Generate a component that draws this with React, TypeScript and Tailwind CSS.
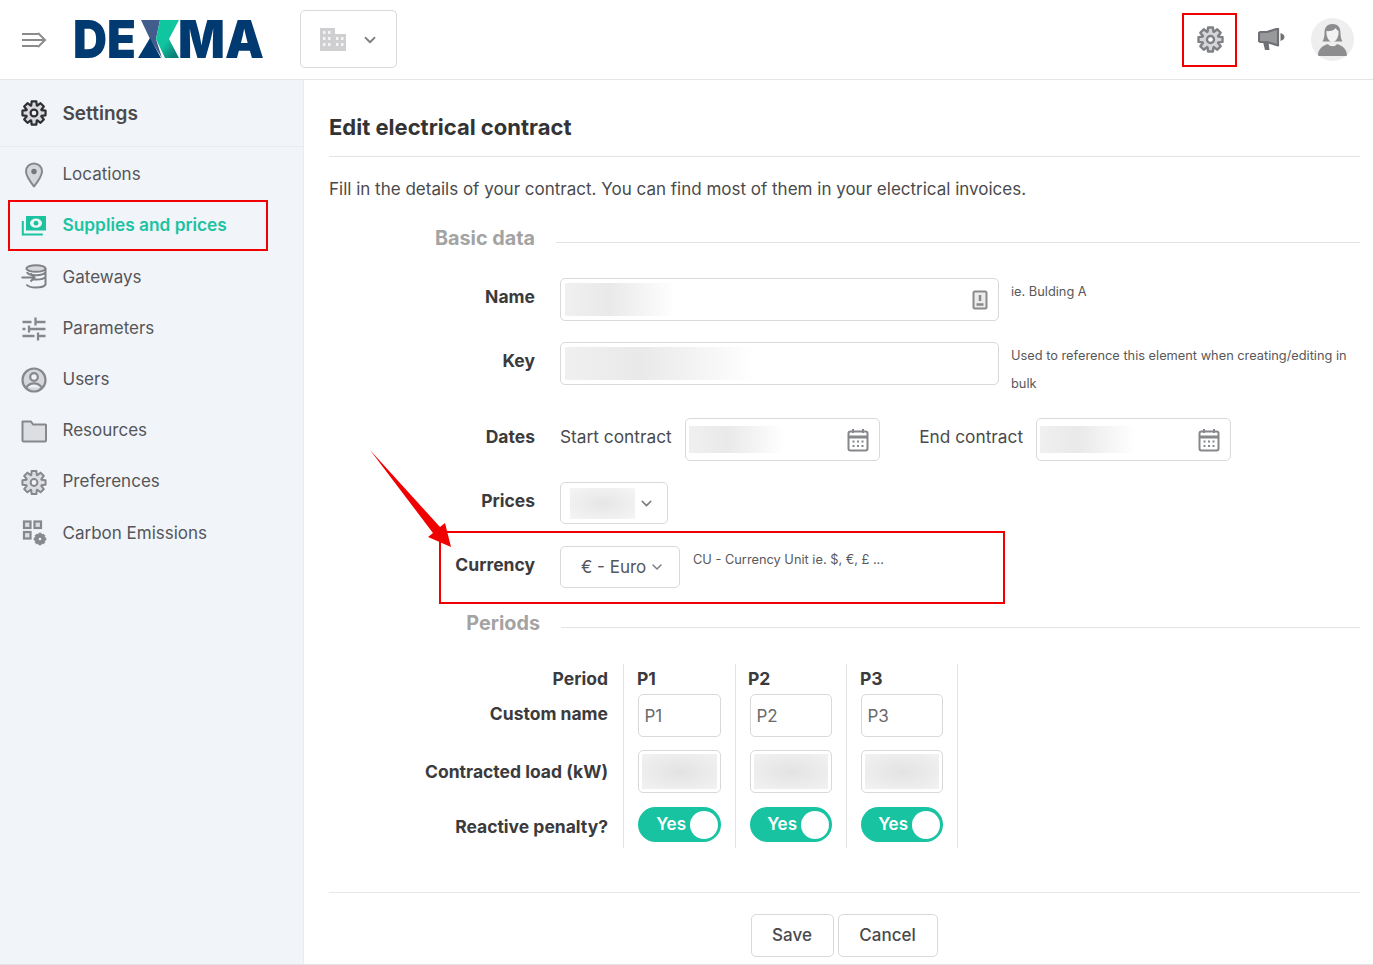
import React from 'react';
import { ChevronDown } from 'lucide-react';

// chunky 8 tooth gear, same look as the app's settings icon
const gearPath = () => {
  const points: string[] = [];
  for (let i = 0; i < 8; i++) {
    const a = (i * Math.PI) / 4 - Math.PI / 2;
    const at = (r: number, d: number) => {
      const x = 13 + r * Math.cos(a + d);
      const y = 13 + r * Math.sin(a + d);
      return `${x.toFixed(2)},${y.toFixed(2)}`;
    };
    points.push(at(8, -0.36), at(11.8, -0.2), at(11.8, 0.2), at(8, 0.36));
  }
  return `M${points.join('L')}Z`;
};

const Gear = ({ size, color, fill = 'none', stroke = 2, hole = '#ffffff' }: { size: number; color: string; fill?: string; stroke?: number; hole?: string }) => (
  <svg width={size} height={size} viewBox="0 0 26 26" fill="none">
    <path d={gearPath()} fill={fill} stroke={color} strokeWidth={stroke} strokeLinejoin="round" />
    <circle cx="13" cy="13" r="3.400" fill={hole} stroke={color} strokeWidth={stroke} />
  </svg>
);

const PinIcon = () => (
  <svg width="26" height="26" viewBox="0 0 26 26">
    <path d="M13 1.500c-4.600 0-8 3.400-8 8 0 4.800 4.600 10.600 8 15 3.400-4.400 8-10.200 8-15 0-4.600-3.400-8-8-8z" fill="#d5d7db" stroke="#86888c" strokeWidth="2" strokeLinejoin="round" />
    <circle cx="13" cy="9.500" r="2.700" fill="#75777b" />
  </svg>
);

const MoneyIcon = () => (
  <svg width="26" height="26" viewBox="0 0 26 26">
    <path d="M1.800 8v13.500h20" fill="none" stroke="#1cc3a0" strokeWidth="2" />
    <rect x="5" y="3" width="20" height="14.500" fill="#1cc3a0" />
    <ellipse cx="15" cy="10.200" rx="6" ry="4.600" fill="#eef6f5" />
    <circle cx="15" cy="10.200" r="2.400" fill="#1cc3a0" />
  </svg>
);

const GatewayIcon = () => (
  <svg width="26" height="26" viewBox="0 0 26 26" fill="none" stroke="#7f8185" strokeWidth="2">
    <ellipse cx="15" cy="4.500" rx="9.500" ry="3.300" fill="#d5d7db" />
    <path d="M6 8c.5 2 3.500 3.200 9 3.200S23.500 10 24.500 8M11 15.300c1.200.2 2.500.3 4 .3 5 0 8.500-1 9.500-3M5.500 20.500c1.500 2 5 3 9.500 3 5 0 8.500-1 9.500-3M24.500 4.500v16.500" />
    <path d="M.500 13.500h12.500M9.500 9.500l4 4-4 4" />
  </svg>
);

const SlidersIcon = () => (
  <svg width="26" height="26" viewBox="0 0 26 26" fill="none" stroke="#86888c" strokeWidth="2.300">
    <path d="M1.500 6h9M14.500 6h10M14.500 1.500v8M1.500 13h3M8 13h16.500M8 9.500v7M1.500 20h12M17 20h7.500M17 16.500v8" />
  </svg>
);

const UserCircleIcon = () => (
  <svg width="26" height="26" viewBox="0 0 26 26" fill="none" stroke="#86888c" strokeWidth="2.200">
    <circle cx="13" cy="13" r="11.500" fill="#d5d7db" />
    <circle cx="13" cy="10" r="3.800" fill="#eef1f5" />
    <path d="M5.500 20.500c1.500-3 4-4.200 7.500-4.200s6 1.200 7.500 4.200" fill="#eef1f5" />
  </svg>
);

const FolderIcon = () => (
  <svg width="26" height="26" viewBox="0 0 26 26">
    <path d="M1.500 3.500h8.500l2 3h12.500a.5.5 0 0 1 .5.500v15.500a1 1 0 0 1-1 1H2.500a1 1 0 0 1-1-1z" fill="#dcdee2" stroke="#86888c" strokeWidth="2" strokeLinejoin="round" />
  </svg>
);

const CarbonIcon = () => (
  <svg width="26" height="26" viewBox="0 0 26 26" fill="none" stroke="#86888c" strokeWidth="2.200">
    <rect x="3" y="1.500" width="6.500" height="6.500" fill="#dcdee2" />
    <rect x="13.500" y="1.500" width="6.500" height="6.500" fill="#dcdee2" />
    <rect x="3" y="12" width="6.500" height="6.500" fill="#dcdee2" />
    <path d={gearPath()} transform="translate(12.500 12.500) scale(.5)" fill="#86888c" stroke="#86888c" strokeWidth="2" />
    <circle cx="19" cy="19" r="1.300" fill="#f1f4f8" stroke="none" />
  </svg>
);

const CalendarIcon = () => (
  <svg width="22" height="24" viewBox="0 0 22 24" fill="none" stroke="#85878b" strokeWidth="2">
    <rect x="1.500" y="3.500" width="19" height="19" rx="2" />
    <path d="M1.500 9h19" strokeWidth="3" />
    <path d="M6 1v4M16 1v4" />
    <path d="M5.500 13.500h2M10 13.500h2M14.500 13.500h2M5.500 18h2M10 18h2M14.500 18h2" strokeWidth="2" />
  </svg>
);

const DexmaLogo = () => (
  <svg className="-mr-[10px]" width="200" height="66" viewBox="0 -13 200 66">
    <defs>
      <linearGradient id="xgreen" x1="0" y1="0" x2="0.700" y2="1">
        <stop offset="0" stopColor="#0fc89f" />
        <stop offset="0.600" stopColor="#10c49f" />
        <stop offset="1" stopColor="#0b7f78" />
      </linearGradient>
    </defs>
    <text x="-1" y="38" fontFamily="Inter, sans-serif" fontWeight="900" fontSize="52" fill="#003a70" textLength="63" lengthAdjust="spacingAndGlyphs">DE</text>
    <polygon points="67,0 86,0 82,19 88,38 76,19" fill="#425c8c" />
    <polygon points="64,38 76,18 87,38" fill="#003a70" />
    <polygon points="86,0 105,0 95,19 105,38 91,38 82,19" fill="url(#xgreen)" />
    <text x="104" y="38" fontFamily="Inter, sans-serif" fontWeight="900" fontSize="52" fill="#003a70" textLength="86" lengthAdjust="spacingAndGlyphs">MA</text>
  </svg>
);

const Blur = ({ className }: { className: string }) => (
  <div className={`bg-linear-to-r from-[#f0f0f0] via-[#e9e9e9] via-40% to-white ${className}`} />
);

const navItems = [
  { label: 'Locations', icon: <PinIcon /> },
  { label: 'Supplies and prices', icon: <MoneyIcon />, active: true },
  { label: 'Gateways', icon: <GatewayIcon /> },
  { label: 'Parameters', icon: <SlidersIcon /> },
  { label: 'Users', icon: <UserCircleIcon /> },
  { label: 'Resources', icon: <FolderIcon /> },
  { label: 'Preferences', icon: <Gear size={27} color="#86888c" fill="#dcdee2" stroke={2} hole="#f1f4f8" /> },
  { label: 'Carbon Emissions', icon: <CarbonIcon /> },
];

const inputBox = 'border border-[#d9d9d9] rounded-[5px] bg-white shrink-0';
const labelText = 'text-[17.500px] font-bold text-[#3b3b3d]';
const helpText = 'text-[12.800px] text-[#58585a]';

const Legend = ({ title, width, top }: { title: string; width: string; top: string }) => (
  <div className={`flex items-center gap-[21px] ${top}`}>
    <div className={`${width} text-right text-[19.800px] leading-6 font-bold text-[#a3a3a3] translate-y-[1px]`}>{title}</div>
    <div className="flex-1 h-px mt-[10px] bg-[#e3e3e3]" />
  </div>
);

const FormRow = ({ label, top, height, children }: { label: string; top: string; height: string; children: React.ReactNode }) => (
  <div className={`flex ${top} ${height}`}>
    <div className={`w-[206px] text-right pt-[7px] leading-6 ${labelText}`}>{label}</div>
    <div className="ml-[25px] flex flex-1 min-w-0">{children}</div>
  </div>
);

const Toggle = () => (
  <div className="h-[35px] rounded-full bg-[#17c3a1] flex items-center justify-end pr-[3px] gap-[4px]">
    <span className="text-[17px] font-semibold text-white">Yes</span>
    <span className="w-[28px] h-[28px] rounded-full bg-white" />
  </div>
);

const PeriodColumn = ({ name, width, boxWidth, nudge, last }: { name: string; width: string; boxWidth: string; nudge: string; last?: boolean }) => (
  <div className={`${width} border-l border-[#e3e3e3] pl-[14px] ${last ? 'border-r' : ''}`}>
    <div className={`h-[30px] leading-[30px] ${nudge} ${labelText}`}>{name}</div>
    <div className={`${boxWidth} h-[43px] ${inputBox} flex items-center pl-[5.500px] pt-[2px] text-[17px] text-[#6a6a6c]`}>{name}</div>
    <div className={`${boxWidth} h-[43px] mt-[13px] ${inputBox} p-[3px]`}>
      <div className="h-full bg-radial from-[#e3e3e3] to-[#f2f2f2]" />
    </div>
    <div className={`${boxWidth} mt-[14px]`}><Toggle /></div>
  </div>
);

const App = () => {
  return (
    <div className="relative w-full h-[965px] overflow-hidden bg-white font-['Inter',sans-serif]">
      <header className="h-[80px] border-b border-[#e5e5e5] flex items-center pl-[22px]">
        <svg width="25" height="18" viewBox="0 0 25 18" fill="none" stroke="#8b8b8d" strokeWidth="2">
          <path d="M0 3h16M0 9h23M0 15h16M16 2l7 7-7 7" />
        </svg>
        <div className="ml-[27px]"><DexmaLogo /></div>
        <div className={`ml-[36px] w-[97px] h-[58px] -mt-[2px] ${inputBox} flex items-center pl-[19px]`}>
          <svg width="26" height="24" viewBox="0 0 26 24">
            <path d="M0 1h15v6h11v17H0z" fill="#cfcfd1" />
            <path d="M3 4h2.500v3H3zM8 4h2.500v3H8zM3 10h2.500v3H3zM8 10h2.500v3H8zM3 16h2.500v3H3zM8 16h2.500v3H8zM16 10h2.500v3H16zM21 10h2.500v3H21zM16 16h2.500v3H16zM21 16h2.500v3H21z" fill="#f4f4f4" />
          </svg>
          <ChevronDown size={18} color="#808082" strokeWidth={2.400} className="ml-[15px] mt-[3px]" />
        </div>
        <div className="ml-auto flex items-center pr-[19px]">
          <Gear size={27} color="#7e8084" fill="#d4d5d8" stroke={2.300} />
          <svg className="ml-[34px]" width="27" height="23" viewBox="0 0 27 23">
            <path d="M20 .500v17L9 14H2.500A1.500 1.500 0 0 1 1 12.500v-7A1.500 1.500 0 0 1 2.500 4H9z" fill="#98999b" stroke="#6f7073" strokeWidth="2.200" strokeLinejoin="round" />
            <path d="M5 14h5.500l1 8H7z" fill="#6f7073" />
            <path d="M22.500 5c2.300.8 4 2 4 4s-1.700 3.200-4 4z" fill="#6f7073" />
          </svg>
          <div className="ml-[26px] w-[43px] h-[43px] rounded-full bg-[#eeeeee] overflow-hidden">
            <svg width="43" height="43" viewBox="0 0 43 43">
              <path d="M21.500 6c-6 0-8 4-8 9 0 4-.7 6-2 8.500h20c-1.300-2.500-2-4.500-2-8.500 0-5-2-9-8-9z" fill="#8d8d8f" />
              <path d="M15.500 13c3 .5 8-.5 9-3 1 1.500 2.300 2.500 3 3 .5 6-2.500 11-6 11s-6.500-5-6-11z" fill="#f2f2f2" />
              <path d="M7 38c0-7 4-10 10-12 1.500 3 7.500 3 9 0 6 2 10 5 10 12z" fill="#8d8d8f" />
            </svg>
          </div>
        </div>
      </header>

      <div className="flex h-[884px]">
        <aside className="w-[304px] shrink-0 bg-[#f1f4f8] border-r border-[#e9ebee]">
          <div className="h-[67px] border-b border-[#e8eaee] flex items-center pl-[21px] gap-[16px]">
            <Gear size={26} color="#2f2f33" fill="#d9dade" stroke={2.200} hole="#f1f4f8" />
            <span className="text-[19px] font-semibold text-[#4a4a4d] translate-y-[1px] -translate-x-[0.500px]">Settings</span>
          </div>
          <nav className="pt-[2.400px]">
            {navItems.map((item) => (
              <div key={item.label} className="h-[51.200px] flex items-center pl-[21px] gap-[16px]">
                <span className="w-[26px] flex justify-center">{item.icon}</span>
                <span className={`-translate-x-[0.500px] ${item.active ? 'text-[17.300px] font-semibold text-[#1cc3a0] -translate-y-[1px]' : 'text-[17px] text-[#55565a]'}`}>{item.label}</span>
              </div>
            ))}
          </nav>
        </aside>

        <main className="flex-1 pl-[25px] pr-[13px]">
          <div className="h-[77px] border-b border-[#e3e3e3] pt-[32px]">
            <h1 className="text-[22px] leading-[30px] font-bold text-[#333335]">Edit electrical contract</h1>
          </div>
          <p className="mt-[20px] -mb-px text-[17px] leading-6 text-[#4a4a4c]">
            Fill in the details of your contract. You can find most of them in your electrical invoices.
          </p>

          <Legend title="Basic data" width="w-[206px]" top="mt-[25px]" />

          <FormRow label="Name" top="mt-[29px]" height="h-[43px]">
            <div className={`w-[439px] ${inputBox} p-[4px] pr-[10px] flex items-center justify-between`}>
              <Blur className="w-[110px] h-full" />
              <svg width="16" height="20" viewBox="0 0 16 20" fill="none" stroke="#8a8a8c" strokeWidth="2">
                <rect x="1.500" y="1.500" width="13" height="17" rx="1.500" fill="#ececec" />
                <path d="M4.500 14.500h7M8 5v6" strokeWidth="2.500" />
              </svg>
            </div>
            <span className={`ml-[12px] pt-[4px] leading-5 ${helpText}`}>ie. Bulding A</span>
          </FormRow>

          <FormRow label="Key" top="mt-[21px]" height="h-[43px]">
            <div className={`w-[439px] ${inputBox} p-[4px]`}>
              <Blur className="w-[190px] h-full" />
            </div>
            <span className={`ml-[12px] leading-[28px] ${helpText}`}>
              Used to reference this element when creating/editing in bulk
            </span>
          </FormRow>

          <FormRow label="Dates" top="mt-[33px]" height="h-[43px]">
            <span className="pt-[7px] text-[17.300px] leading-6 text-[#4a4a4c]">Start contract</span>
            <div className={`ml-[13px] w-[195px] ${inputBox} p-[3px] pr-[10px] flex items-center justify-between`}>
              <Blur className="w-[95px] h-[27px]" />
              <CalendarIcon />
            </div>
            <span className="ml-[39.500px] pt-[7px] text-[17.300px] leading-6 text-[#4a4a4c]">End contract</span>
            <div className={`ml-[12.500px] w-[195px] ${inputBox} p-[3px] pr-[10px] flex items-center justify-between`}>
              <Blur className="w-[95px] h-[27px]" />
              <CalendarIcon />
            </div>
          </FormRow>

          <FormRow label="Prices" top="mt-[21px]" height="h-[42px]">
            <div className={`w-[108px] ${inputBox} pl-[9px] pr-[13px] flex items-center justify-between`}>
              <div className="w-[65px] h-[31px] bg-radial from-[#e6e6e6] to-[#f5f5f5]" />
              <ChevronDown size={17} color="#7e7e80" strokeWidth={2.200} className="translate-x-[1px]" />
            </div>
          </FormRow>

          <FormRow label="Currency" top="mt-[22px]" height="h-[42px]">
            <div className={`w-[120px] ${inputBox} pl-[21px] pr-[14px] flex items-center justify-between text-[17px] text-[#55565a]`}>
              <span className="translate-y-[1px] -translate-x-[1px]">€ - Euro</span>
              <ChevronDown size={16} color="#7e7e80" strokeWidth={2.200} />
            </div>
            <span className={`ml-[13px] pt-[4px] leading-5 ${helpText}`}>CU - Currency Unit ie. $, €, £ ...</span>
          </FormRow>

          <Legend title="Periods" width="w-[211px]" top="mt-[22px]" />

          <div className="flex mt-[30px] h-[184px]">
            <div className={`w-[279px] mr-[15px] text-right ${labelText}`}>
              <div className="h-[30px] leading-[30px]">Period</div>
              <div className="h-[56px] leading-[40px]">Custom name</div>
              <div className="h-[57px] leading-[40px] pt-[2px]">Contracted load (kW)</div>
              <div className="h-[41px] leading-[40px]">Reactive penalty?</div>
            </div>
            <PeriodColumn name="P1" width="w-[112px]" boxWidth="w-[83px]" nudge="-ml-px" />
            <PeriodColumn name="P2" width="w-[111px]" boxWidth="w-[82px]" nudge="-ml-[2px]" />
            <PeriodColumn name="P3" width="w-[112px]" boxWidth="w-[82px]" nudge="-ml-px" last />
          </div>

          <div className="mt-[44px] h-px bg-[#e8e8e8]" />
          <div className="mt-[21px] flex justify-center gap-[4px] -ml-px">
            <button className={`w-[83px] h-[43px] ${inputBox} text-[17px] font-medium text-[#4a4a4c]`}>Save</button>
            <button className={`w-[100px] h-[43px] ${inputBox} text-[17px] font-medium text-[#4a4a4c]`}>Cancel</button>
          </div>
        </main>
      </div>

      <div className="absolute left-[1182px] top-[13px] w-[55px] h-[54px] border-2 border-[#f00000]" />
      <div className="absolute left-[8px] top-[200px] w-[260px] h-[51px] border-2 border-[#f00000]" />
      <div className="absolute left-[439px] top-[531px] w-[566px] h-[73px] border-2 border-[#f00000]" />
      <svg className="absolute left-[360px] top-[440px]" width="100" height="115" viewBox="0 0 100 115">
        <polygon points="10,10 80,87 85,83 91,107 68,97 73,93" fill="#f00000" />
      </svg>
      <div className="absolute left-0 right-0 bottom-0 h-px bg-[#e3e3e3]" />
    </div>
  );
};

export default App;
